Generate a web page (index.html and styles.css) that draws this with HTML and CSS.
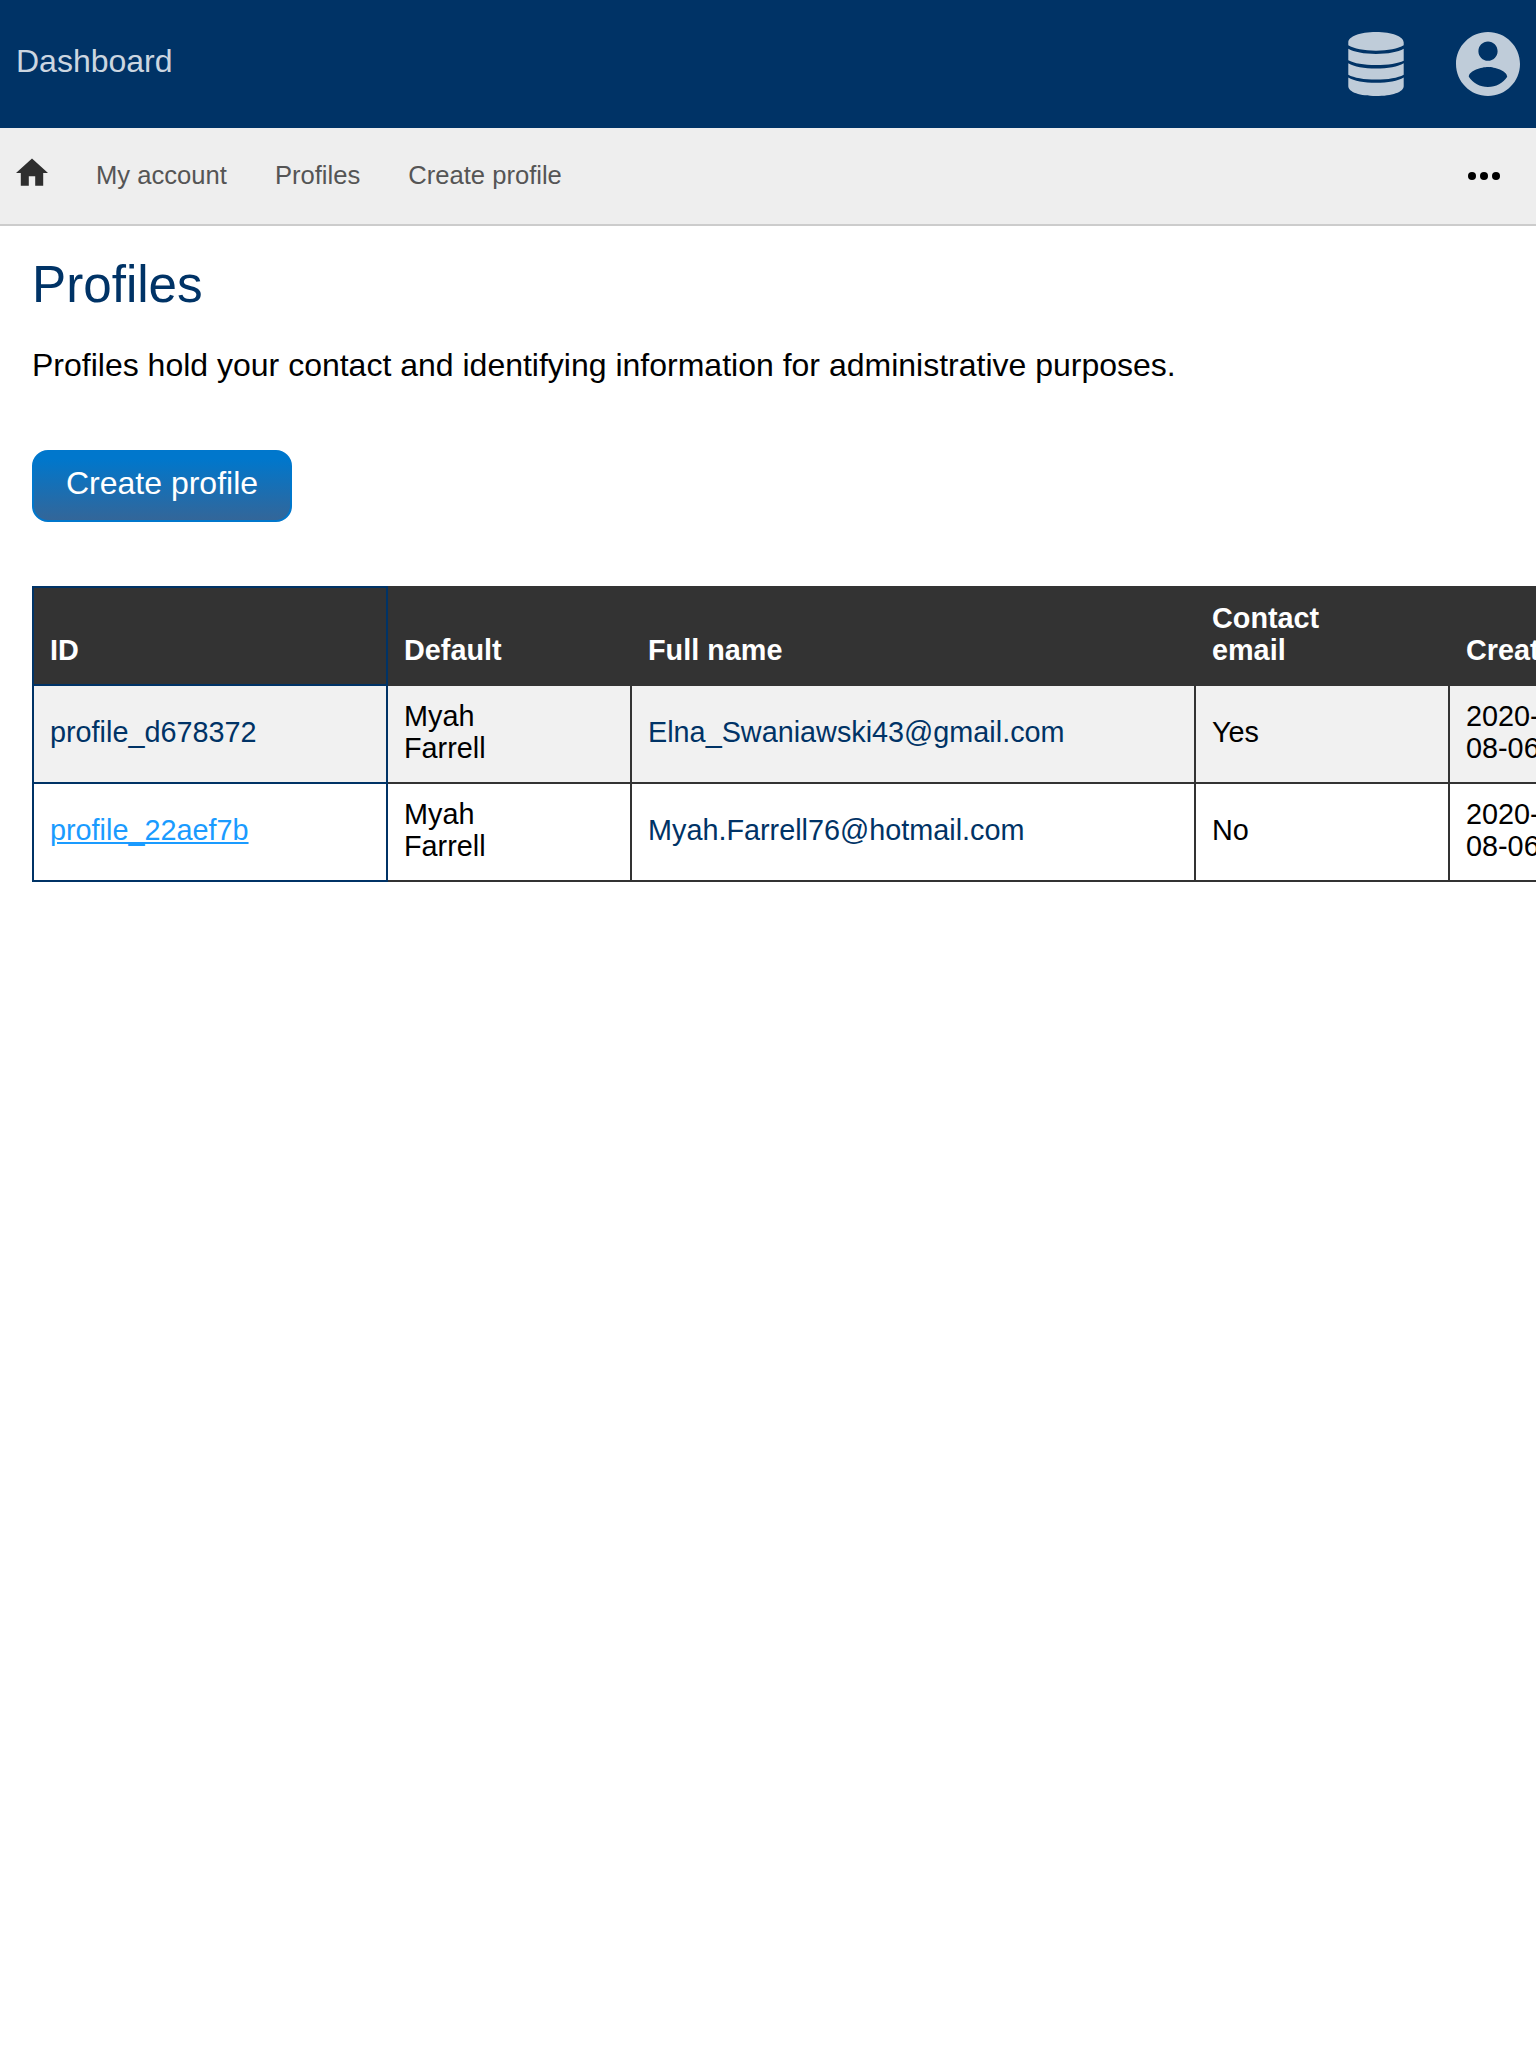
FILE: index.html
```html
<!DOCTYPE html>
<html lang="en">
<head>
<meta charset="utf-8">
<title>Profiles</title>
<link rel="stylesheet" href="styles.css">
</head>
<body>
<header class="topbar">
  <a class="brand">Dashboard</a>
  <div class="tools">
    <svg class="db-icon" viewBox="0 0 56 64"><path d="M.3 10.500C.3 4.500 12 0 28 0s27.700 4.500 27.700 10.500v2.800C50 16.700 40 18.700 28 18.700S6 16.700.3 13.300zM.3 16.700C6 20 16 21.900 28 21.900S50 20 55.700 16.700v12C50 31.500 40 33 28 33S6 31.500.3 28.300zM.3 31.200C6 34.600 16 36.500 28 36.500s22-1.900 27.700-5.300v11.600C50 46 40 47.600 28 47.600S6 46 .3 42.800zM.3 45.500C6 48.900 16 50.800 28 50.800s22-1.900 27.700-5.300v8.700C55.700 60 44 64 28 64S.3 60 .3 54.200z"/></svg>
    <svg class="user-icon" viewBox="2 2 20 20"><path d="M12 2C6.480 2 2 6.480 2 12s4.480 10 10 10 10-4.480 10-10S17.520 2 12 2zm0 3c1.660 0 3 1.340 3 3s-1.340 3-3 3-3-1.340-3-3 1.340-3 3-3zm0 14.200c-2.500 0-4.710-1.280-6-3.220.03-1.990 4-3.080 6-3.080 1.990 0 5.970 1.090 6 3.080-1.290 1.940-3.500 3.220-6 3.220z"/></svg>
  </div>
</header>
<nav class="menu">
  <svg class="home-icon" viewBox="2 2 20 20"><path d="M10 20v-6h4v6h5v-8h3L12 3 2 12h3v8z"/></svg>
  <a>My account</a>
  <a>Profiles</a>
  <a>Create profile</a>
  <svg class="more-icon" viewBox="0 0 32 8"><circle cx="4" cy="4" r="4"/><circle cx="16" cy="4" r="4"/><circle cx="28" cy="4" r="4"/></svg>
</nav>
<main class="content">
  <h1>Profiles</h1>
  <p>Profiles hold your contact and identifying information for administrative purposes.</p>
  <a class="button">Create profile</a>
  <table class="profiles">
    <colgroup><col class="c-id"><col class="c-default"><col class="c-name"><col class="c-email"><col class="c-created"></colgroup>
    <thead>
      <tr><th class="id">ID</th><th>Default</th><th>Full name</th><th>Contact<br>email</th><th>Created</th></tr>
    </thead>
    <tbody>
      <tr><td class="id"><a>profile_d678372</a></td><td>Myah<br>Farrell</td><td><a>Elna_Swaniawski43@gmail.com</a></td><td>Yes</td><td>2020-<br>08-06</td></tr>
      <tr><td class="id"><a class="active">profile_22aef7b</a></td><td>Myah<br>Farrell</td><td><a>Myah.Farrell76@hotmail.com</a></td><td>No</td><td>2020-<br>08-06</td></tr>
    </tbody>
  </table>
</main>
</body>
</html>
```
FILE: styles.css
```css
* { box-sizing: border-box; }
html { height: 100%; overflow: hidden; }
body {
  margin: 0;
  height: 100%;
  overflow: hidden;
  background: #fff;
  color: #000;
  font: 32px/1.5 "Liberation Sans", Arial, sans-serif;
}
svg { display: block; flex: none; }
.topbar {
  display: flex;
  justify-content: space-between;
  align-items: center;
  height: 128px;
  padding: 0 16px;
  background: #036;
}
.brand { color: #ccd6e0; padding-bottom: 6px; }
.tools { display: flex; gap: 52px; }
.tools svg { fill: #bfccd9; height: 64px; }
.db-icon { width: 56px; }
.user-icon { width: 64px; }
.menu {
  display: flex;
  align-items: center;
  gap: 48px;
  height: 98px;
  padding: 0 36px 0 16px;
  background: #eee;
  border-bottom: 2px solid #ccc;
  color: #555;
  font-size: 25.6px;
}
.menu a { padding-bottom: 2px; }
.home-icon { width: 32px; height: 32px; margin-bottom: 6.4px; fill: #2e2e2e; }
.more-icon { width: 32px; height: 8px; margin-left: auto; }
.content { padding: 20px 32px 0; }
h1 {
  margin: 0;
  color: #036;
  font-size: 51.2px;
  font-weight: 400;
  line-height: 77px;
}
p { margin: 18px 0 61px; }
.button {
  display: block;
  width: 260px;
  height: 72px;
  border: 2px solid #07c;
  border-radius: 16px;
  background: linear-gradient(#07c 10%, #369);
  color: #fff;
  line-height: 62px;
  text-align: center;
}
.profiles {
  width: 1626px;
  margin-top: 64px;
  border-collapse: collapse;
  table-layout: fixed;
  font-size: 28.8px;
  line-height: 32px;
}
.c-id { width: 354px; }
.c-default { width: 244px; }
.c-name { width: 564px; }
.c-email { width: 254px; }
.c-created { width: 210px; }
.profiles th, .profiles td {
  padding: 14px 16px 18px;
  border: 2px solid #333;
  text-align: left;
  vertical-align: middle;
}
.profiles th { background: #333; color: #fff; vertical-align: bottom; }
.profiles .id { border-color: #036; }
.profiles a { color: #036; }
.profiles .active { color: #1a9bff; text-decoration: underline; }
tbody tr:nth-child(odd) { background: #f1f1f1; }
```
